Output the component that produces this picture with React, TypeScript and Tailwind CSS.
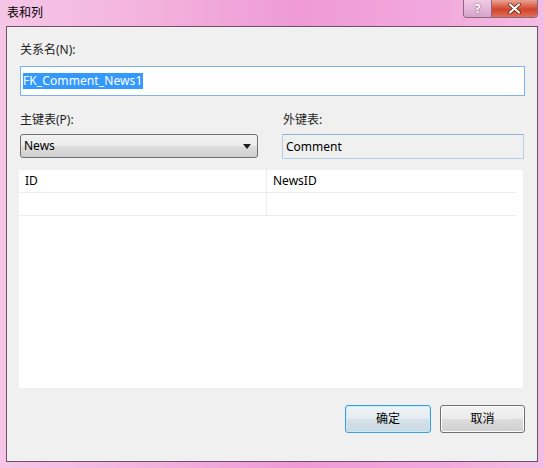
import React from "react";

const ui = { fontFamily: '"Noto Sans", "Noto Sans CJK SC", sans-serif' };

function Label({ children }: { children: React.ReactNode }) {
  return <div className="h-[16px] text-[12px] leading-[16px] text-[#1e1e1e]">{children}</div>;
}

export default function App() {
  return (
    <div
      className="relative w-[544px] h-[468px] overflow-hidden bg-[linear-gradient(90deg,#f6c6e6_0%,#f2b0dd_30%,#ef9ad6_55%,#f2a8dc_80%,#f4bde3_100%)]"
      style={ui}
    >
      {/* title bar */}
      <div className="h-[26px] pl-[7px] pt-[5px] text-[12px] leading-[16px] text-black">表和列</div>

      {/* caption buttons */}
      <div className="absolute left-[463px] top-0 flex h-[18px] overflow-hidden rounded-b-[4px] border border-t-0 border-[#8a6580]">
        <div className="flex w-[27px] items-center justify-center bg-[linear-gradient(180deg,#f1cbe6,#d7a3c9)] text-[12px] font-bold text-white [text-shadow:0_0_2px_#6a4a60]">
          ?
        </div>
        <div className="flex w-[46px] items-center justify-center border-l border-[#8a6580] bg-[linear-gradient(180deg,#e8a394,#d2442c_55%,#e0705a)]">
          <svg width="13" height="11" viewBox="0 0 13 11">
            <path d="M2 1.5 L11 9.5 M11 1.5 L2 9.5" stroke="#5a1a10" strokeWidth="3.6" strokeLinecap="round" />
            <path d="M2 1.5 L11 9.5 M11 1.5 L2 9.5" stroke="#ffffff" strokeWidth="2.2" strokeLinecap="round" />
          </svg>
        </div>
      </div>

      {/* client area */}
      <div className="ml-[6px] h-[436px] w-[532px] border border-[#6e5068] bg-[#f0f0f0]">
        <div className="pl-[13px] pr-[12px] pt-[15px]">
          <Label>关系名(N):</Label>
          <div className="mt-[8px] flex h-[30px] items-center border border-[#7eb4ea] bg-white px-[2px]">
            <span className="bg-[#3399ff] pr-[1px] text-[12px] leading-[16px] tracking-[0.1px] text-white">FK_Comment_News1</span>
          </div>

          <div className="mt-[16px] flex">
            <div className="w-[238px]">
              <Label>主键表(P):</Label>
              <div className="mt-[6px] flex h-[24px] items-center justify-between rounded-[3px] border border-[#707070] bg-[linear-gradient(180deg,#f2f2f2_0%,#ebebeb_50%,#dddddd_51%,#cfcfcf_100%)] pl-[3px] pr-[6px]">
                <span className="text-[12px] leading-[16px] text-black">News</span>
                <svg width="8" height="5" viewBox="0 0 8 5">
                  <path d="M0 0 H8 L4 5 Z" fill="#1e1e1e" />
                </svg>
              </div>
            </div>
            <div className="ml-[24px] w-[242px]">
              <div className="pl-[1px]">
                <Label>外键表:</Label>
              </div>
              <div className="mt-[6px] flex h-[25px] items-center border border-[#b5cfe7] border-t-[#8fb3d6] bg-[#f0f0f0] pl-[3px]">
                <span className="text-[12px] leading-[16px] text-black">Comment</span>
              </div>
            </div>
          </div>
        </div>

        {/* column mapping grid */}
        <div className="ml-[12px] mt-[11px] h-[218px] w-[504px] bg-white">
          <div className="w-[497px] text-[12px] leading-[16px] text-black">
            <div className="grid h-[23px] grid-cols-[248px_1fr] border-b border-[#ececec]">
              <div className="flex items-center border-r border-[#ececec] pl-[6px]">ID</div>
              <div className="flex items-center pl-[6px]">NewsID</div>
            </div>
            <div className="grid h-[23px] grid-cols-[248px_1fr] border-b border-[#ececec]">
              <div className="border-r border-[#ececec]" />
              <div />
            </div>
          </div>
        </div>

        {/* dialog buttons */}
        <div className="mt-[17px] flex justify-end gap-[9px] pr-[12px]">
          <button className="flex h-[28px] w-[86px] items-center justify-center rounded-[3px] border border-[#3c9ee0] bg-[linear-gradient(180deg,#eef4f8_0%,#e3ecf1_50%,#d6e2e9_51%,#cbd9e1_100%)] text-[12px] text-black shadow-[inset_0_0_0_1px_#c6ecfb]">
            确定
          </button>
          <button className="flex h-[28px] w-[85px] items-center justify-center rounded-[3px] border border-[#707070] bg-[linear-gradient(180deg,#f2f2f2_0%,#ebebeb_50%,#dddddd_51%,#cfcfcf_100%)] text-[12px] text-black shadow-[inset_0_0_0_1px_#fcfcfc]">
            取消
          </button>
        </div>
      </div>
    </div>
  );
}
